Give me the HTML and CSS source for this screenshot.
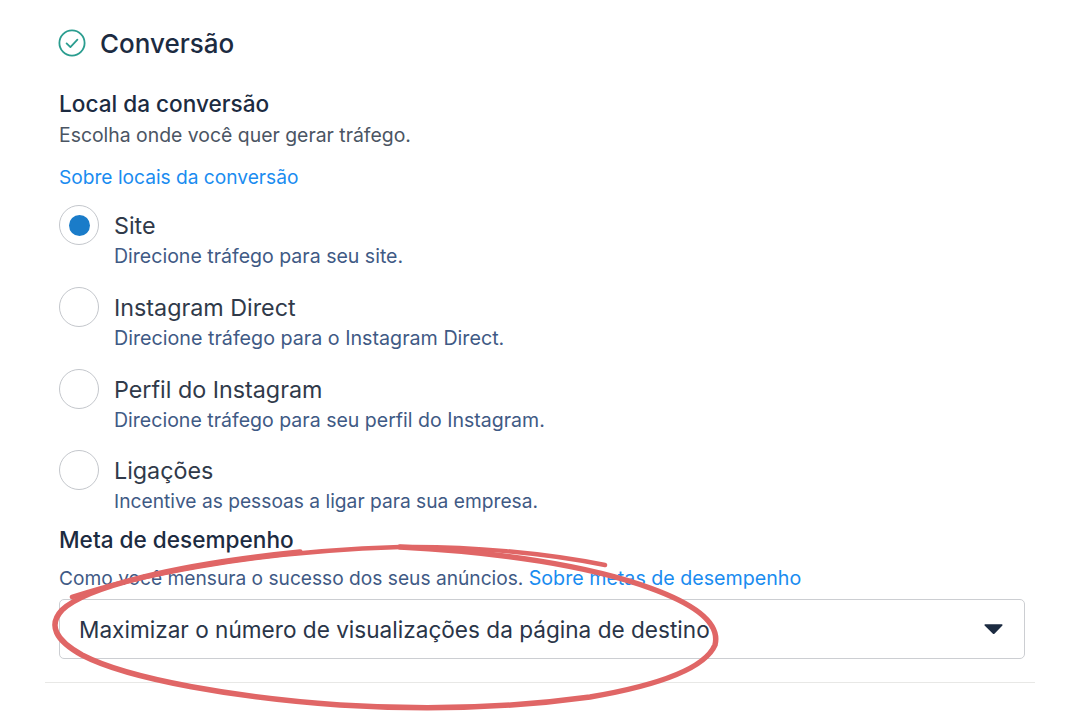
FILE: index.html
```html
<!DOCTYPE html>
<html lang="pt-BR">

<head>
    <meta charset="UTF-8">
    <title>Conversão</title>
    <link rel="stylesheet" href="styles.css">
</head>

<body>
    <section class="panel">
        <div class="section-title">
            <svg class="check-icon" viewBox="0 0 28 28" fill="none">
                <circle cx="14" cy="14" r="12.6" stroke="#2a9d8f" stroke-width="1.8" />
                <path d="M8.6 14.4l3.8 3.7 7-7.4" stroke="#2a9d8f" stroke-width="1.8" stroke-linecap="round" stroke-linejoin="round" />
            </svg>
            <h2>Conversão</h2>
        </div>

        <h3>Local da conversão</h3>
        <p class="hint">Escolha onde você quer gerar tráfego.</p>
        <a class="link about-link" href="#">Sobre locais da conversão</a>

        <div class="options">
            <div class="option">
                <span class="radio checked"></span>
                <div>
                    <div class="option-name">Site</div>
                    <div class="option-desc">Direcione tráfego para seu site.</div>
                </div>
            </div>
            <div class="option">
                <span class="radio"></span>
                <div>
                    <div class="option-name">Instagram Direct</div>
                    <div class="option-desc">Direcione tráfego para o Instagram Direct.</div>
                </div>
            </div>
            <div class="option">
                <span class="radio"></span>
                <div>
                    <div class="option-name">Perfil do Instagram</div>
                    <div class="option-desc">Direcione tráfego para seu perfil do Instagram.</div>
                </div>
            </div>
            <div class="option">
                <span class="radio"></span>
                <div>
                    <div class="option-name">Ligações</div>
                    <div class="option-desc">Incentive as pessoas a ligar para sua empresa.</div>
                </div>
            </div>
        </div>

        <h3 class="goal-title">Meta de desempenho</h3>
        <p class="goal-hint">Como você mensura o sucesso dos seus anúncios. <a class="link" href="#">Sobre metas de desempenho</a></p>

        <div class="select">
            <span>Maximizar o número de visualizações da página de destino</span>
            <svg class="caret" viewBox="0 0 20 12"><path d="M1.2 1h17.6c.7 0 1 .8.6 1.300l-8.400 8.600c-.5.500-1.100.500-1.600 0L.6 2.300C.2 1.800.5 1 1.200 1z" fill="#1c2b41" /></svg>
        </div>
    </section>
    <div class="divider"></div>

    <!-- hand drawn red circle over the goal select -->
    <svg class="scribble" viewBox="0 0 1080 716" fill="none">
        <path d="M72 597C130 578 240 552 400 547C470 546 545 553 605 565" stroke="#e06666" stroke-width="4.500" stroke-linecap="round" />
        <path d="M400 547C500 552 590 566 650 588C700 606 720 625 715 645C705 668 660 685 590 697C510 708 420 710 340 705C240 698 130 680 82 655C55 640 48 625 62 610C85 588 170 565 300 552" stroke="#e06666" stroke-width="5.500" stroke-linecap="round" />
    </svg>
</body>

</html>
```

FILE: styles.css
```css
* {
    margin: 0;
    padding: 0;
    box-sizing: border-box;
}

body {
    background: #fff;
    color: #1c2b41;
    font-family: Inter, 'Noto Sans', sans-serif;
    width: 1080px;
    height: 716px;
    overflow: hidden;
}

.panel {
    padding: 26px 55px 0 59px;
}

.section-title {
    display: flex;
    align-items: center;
    gap: 14px;
    height: 34px;
}

.check-icon {
    width: 28px;
    height: 28px;
    margin-left: -1px;
}

h2 {
    font-size: 26px;
    font-weight: 500;
    color: #1c2b41;
}

h3 {
    font-size: 22.600px;
    font-weight: 500;
    color: #1c2b41;
    line-height: 30px;
}

.section-title + h3 {
    margin-top: 29px;
}

.hint {
    font-size: 19.400px;
    line-height: 26px;
    color: #4b5563;
    margin-top: 3px;
}

.link {
    color: #1a8cf0;
    text-decoration: none;
}

.about-link {
    display: block;
    font-size: 19.150px;
    line-height: 26px;
    margin-top: 16px;
}

.options {
    margin-top: 15px;
}

.option {
    display: flex;
    gap: 14px;
    height: 82px;
}

.option:nth-child(3) {
    height: 81px;
}

.radio {
    flex: none;
    width: 40px;
    height: 40px;
    margin-right: 1px;
    border: 1px solid #c4c7cc;
    border-radius: 50%;
    display: flex;
    align-items: center;
    justify-content: center;
}

.radio.checked::after {
    content: '';
    width: 21px;
    height: 21px;
    border-radius: 50%;
    background: #1a7cc9;
}

.option-name {
    font-size: 23.300px;
    line-height: 30px;
    color: #303a4a;
    margin-top: 6px;
}

.option-desc {
    font-size: 19.550px;
    line-height: 26px;
    color: #3f5a85;
    margin-top: 2px;
}

.option:nth-child(2) .option-desc {
    font-size: 19.700px;
}

.option:last-child .option-desc {
    font-size: 19.200px;
}

.goal-title {
    margin-top: -7px;
}

.goal-hint {
    font-size: 19.160px;
    line-height: 26px;
    color: #3f5a85;
    margin-top: 10px;
}

.goal-hint .link {
    font-size: 19.650px;
}

.select {
    display: flex;
    align-items: center;
    justify-content: space-between;
    height: 60px;
    margin-top: 8px;
    padding: 0 21px 0 19px;
    border: 1px solid #ccced2;
    border-radius: 5px;
    font-size: 22.600px;
    color: #2a3548;
}

.caret {
    width: 19px;
    height: 12px;
}

.divider {
    height: 1px;
    background: #e8e8e6;
    margin: 23px 45px 0;
}

.scribble {
    position: absolute;
    left: 0;
    top: 0;
    width: 1080px;
    height: 716px;
}
```
